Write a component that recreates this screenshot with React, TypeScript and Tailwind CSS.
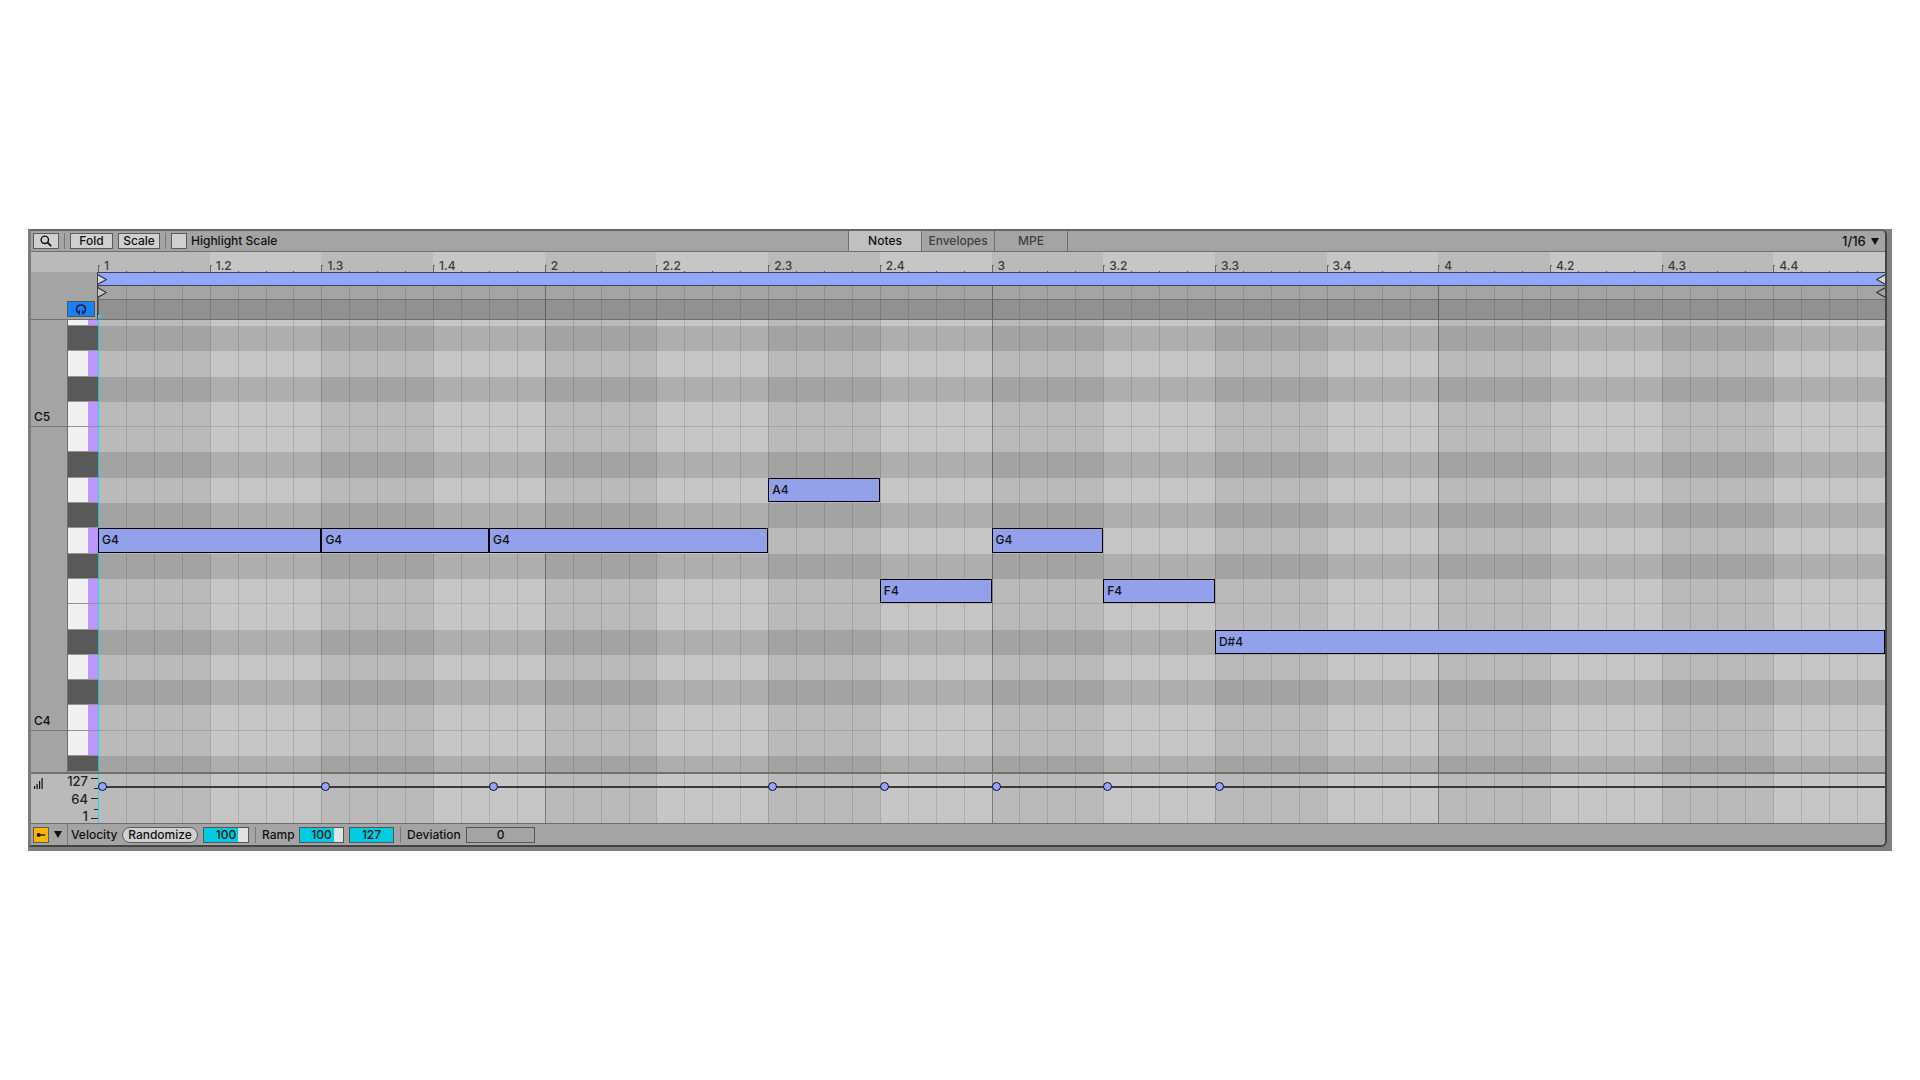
import React, { useState } from 'react';

const BEATS = Array.from({ length: 16 }, (_, i) => i);

// Top to bottom. The first and last rows are cut off by the visible range.
const PITCHES = [
  'E5', 'D#5', 'D5', 'C#5', 'C5', 'B4', 'A#4', 'A4', 'G#4', 'G4',
  'F#4', 'F4', 'E4', 'D#4', 'D4', 'C#4', 'C4', 'B3', 'A#3',
];

interface Note {
  pitch: string;
  start: number; // in sixteenths
  length: number;
}

const NOTES: Note[] = [
  { pitch: 'G4', start: 0, length: 8 },
  { pitch: 'G4', start: 8, length: 6 },
  { pitch: 'G4', start: 14, length: 10 },
  { pitch: 'A4', start: 24, length: 4 },
  { pitch: 'F4', start: 28, length: 4 },
  { pitch: 'G4', start: 32, length: 4 },
  { pitch: 'F4', start: 36, length: 4 },
  { pitch: 'D#4', start: 40, length: 24 },
];

const ROWS = 'grid grid-rows-[6px_repeat(17,minmax(0,1fr))_16px]';
const BUTTON = 'h-4 border border-[#5c5c5c] bg-[#d0d0d0] leading-[14px] font-medium';
const FIELD = 'h-4 border border-[#555] text-center font-medium';
const PARTIAL_FILL = 'bg-linear-to-r from-[#00cbe0] from-78% to-[#e2e2e2] to-78%';

const isBlackKey = (pitch: string) => pitch.includes('#');

const beatLabel = (beat: number) => {
  const bar = Math.floor(beat / 4) + 1;
  return beat % 4 === 0 ? `${bar}` : `${bar}.${(beat % 4) + 1}`;
};

const rowClass = (pitch: string) => {
  if (isBlackKey(pitch)) return 'bg-black/12';
  // neighbouring white keys are told apart by a thin line
  if (pitch === 'C5' || pitch === 'F4' || pitch === 'C4') return 'border-b border-black/12';
  return '';
};

const beatLine = (beat: number, shaded: boolean) => {
  if (beat === 0 && shaded) return 'border-[#19dfe8]';
  return beat % 4 === 0 ? 'border-black/35' : 'border-black/15';
};

const BeatGrid: React.FC<{ shaded?: boolean }> = ({ shaded = false }) => (
  <div className="col-start-1 row-start-1 grid grid-cols-16" aria-hidden="true">
    {BEATS.map((beat) => (
      <div
        key={beat}
        className={`grid grid-cols-4 ${shaded ? (beat % 2 === 0 ? 'bg-[#bababa]' : 'bg-[#c6c6c6]') : ''}`}
      >
        <div className={`border-l ${beatLine(beat, shaded)}`} />
        <div className="border-l border-black/12" />
        <div className="border-l border-black/12" />
        <div className="border-l border-black/12" />
      </div>
    ))}
  </div>
);

const Divider: React.FC = () => <div className="h-4 w-px bg-[#7a7a7a]" />;

const DownArrow: React.FC = () => (
  <svg width="8" height="7" viewBox="0 0 8 7" fill="#111">
    <path d="M0 0h8L4 7z" />
  </svg>
);

const Toolbar: React.FC = () => {
  const [tab, setTab] = useState('Notes');

  return (
    <div className="grid h-[21px] grid-cols-[1fr_auto_1fr] border-b border-[#6e6e6e] bg-[#a4a4a4]">
      <div className="flex items-center gap-[5px] pl-[2px]">
        <button type="button" aria-label="Search" className={`flex w-[26px] items-center justify-center ${BUTTON}`}>
          <svg width="12" height="12" viewBox="0 0 12 12" fill="none" stroke="#111" strokeWidth="1.4">
            <circle cx="4.8" cy="4.8" r="3.7" />
            <path d="M7.4 7.4 11.2 11.2" strokeWidth="1.7" />
          </svg>
        </button>
        <Divider />
        <button type="button" className={`w-[43px] ${BUTTON}`}>
          Fold
        </button>
        <button type="button" className={`w-[42px] ${BUTTON}`}>
          Scale
        </button>
        <Divider />
        <label className="flex items-center gap-1">
          <input
            type="checkbox"
            className="h-4 w-4 appearance-none border border-[#5c5c5c] bg-[#d0d0d0] checked:bg-[#ffb400]"
          />
          Highlight Scale
        </label>
      </div>
      <div role="tablist" className="grid grid-cols-3 border-l border-[#6e6e6e]">
        {['Notes', 'Envelopes', 'MPE'].map((name) => (
          <button
            key={name}
            type="button"
            role="tab"
            aria-selected={tab === name}
            onClick={() => setTab(name)}
            className={`w-[73px] border-r border-[#6e6e6e] font-medium ${
              tab === name ? 'bg-[#c0c0c0] text-[#111]' : 'text-[#404040]'
            }`}
          >
            {name}
          </button>
        ))}
      </div>
      <div className="flex items-center justify-end gap-[5px] pr-[6px]">
        <select aria-label="Grid size" defaultValue="1/16" className="appearance-none text-[13px] leading-4 font-medium">
          <option>1/4</option>
          <option>1/8</option>
          <option>1/16</option>
        </select>
        <DownArrow />
      </div>
    </div>
  );
};

const Ruler: React.FC = () => (
  <div className="grid h-5 grid-cols-[67px_1fr] bg-[#bababa]">
    <div />
    <div className="grid grid-cols-16">
      {BEATS.map((beat) => (
        <div key={beat} className={`grid ${beat % 2 === 0 ? 'bg-[#bababa]' : 'bg-[#c6c6c6]'}`}>
          <div className="col-start-1 row-start-1 grid grid-cols-4 items-end">
            <div className="flex h-[7px]">
              <div className="w-[2px] border-t border-l border-[#666]" />
            </div>
            <div className="h-px w-px bg-[#555]" />
            <div className="h-px w-px bg-[#555]" />
            <div className="h-px w-px bg-[#555]" />
          </div>
          <span className="col-start-1 row-start-1 self-end pl-[6px] leading-3 text-[#3c3c3c]">
            {beatLabel(beat)}
          </span>
        </div>
      ))}
    </div>
  </div>
);

const Marker: React.FC<{ side: 'start' | 'end'; fill: string }> = ({ side, fill }) => (
  <svg width="9" height="11" viewBox="0 0 9 11" fill={fill} stroke="#333" strokeWidth="1.2">
    {side === 'start' ? <path d="M0 .7 8.4 5.5 0 10.3" /> : <path d="M9 .7.6 5.5 9 10.3" />}
  </svg>
);

const LoopLanes: React.FC = () => (
  <div className="grid grid-cols-[67px_1fr] bg-[#a4a4a4]">
    <div className="flex items-end justify-end border-r border-[#444] pr-[2px] pb-[2px]">
      <button
        type="button"
        aria-label="Preview"
        className="flex h-4 w-7 items-center justify-center border border-[#555] bg-[#1a80f5]"
      >
        {/* headphones */}
        <svg width="12" height="12" viewBox="0 0 12 12" fill="none" stroke="#10233c">
          <path d="M2.9 9.6A4.5 4.5 0 1 1 9.1 9.6" strokeWidth="1.6" />
          <path d="M4.2 7.2v4.4M7.8 7.2v4.4" strokeWidth="1.7" />
        </svg>
      </button>
    </div>
    <div>
      <div className="flex h-[14px] items-center justify-between border-y border-[#444] bg-[#92a6ff]">
        <Marker side="start" fill="#d6d6d6" />
        <Marker side="end" fill="#d6d6d6" />
      </div>
      <div className="grid h-[14px] border-b border-[#6e6e6e]">
        <BeatGrid />
        <div className="col-start-1 row-start-1 flex items-center justify-between">
          <Marker side="start" fill="#c8c8c8" />
          <Marker side="end" fill="#a4a4a4" />
        </div>
      </div>
      <div className="grid h-[19px] bg-[#919191]">
        <BeatGrid />
        <svg width="4" height="4" viewBox="0 0 4 4" className="col-start-1 row-start-1 self-end" fill="#12e6f0">
          <path d="M0 0h4L0 4z" />
        </svg>
      </div>
    </div>
  </div>
);

const Keyboard: React.FC = () => (
  <div className="grid grid-cols-[36px_1fr] bg-[#a4a4a4]">
    <div className={`${ROWS} leading-4`}>
      <div className="row-span-5 flex items-end border-b border-[#777] pb-[1px] pl-[3px]">C5</div>
      <div className="row-span-12 flex items-end border-b border-[#777] pb-[1px] pl-[3px]">C4</div>
    </div>
    <div className={`${ROWS} border-l border-[#707070]`}>
      {PITCHES.map((pitch) => (
        <button
          key={pitch}
          type="button"
          aria-label={pitch}
          className={`border-b border-[#949494] ${
            isBlackKey(pitch) ? 'bg-[#595959]' : 'bg-linear-to-l from-[#bc97ff] from-33% to-[#f0f0f0] to-33%'
          }`}
        />
      ))}
    </div>
  </div>
);

const NoteEditor: React.FC = () => (
  <div className="grid h-[453px] grid-cols-[67px_1fr] border-t border-[#6e6e6e]">
    <Keyboard />
    <div className="grid">
      <BeatGrid shaded />
      <div className={`col-start-1 row-start-1 ${ROWS}`}>
        {PITCHES.map((pitch) => (
          <div key={pitch} className={rowClass(pitch)} />
        ))}
      </div>
      <div className={`col-start-1 row-start-1 grid-cols-[repeat(64,minmax(0,1fr))] ${ROWS}`}>
        {NOTES.map((note) => (
          <div
            key={note.start}
            className="mb-px flex items-center border border-black bg-[#92a1ea] pl-[3px]"
            style={{
              gridColumn: `${note.start + 1} / span ${note.length}`,
              gridRow: PITCHES.indexOf(note.pitch) + 1,
            }}
          >
            {note.pitch}
          </div>
        ))}
      </div>
    </div>
  </div>
);

const VelocityLane: React.FC = () => (
  <div className="grid h-[51px] grid-cols-[67px_1fr] border-t-2 border-[#707070]">
    <div className="flex justify-between bg-[#bababa] pl-[3px]">
      <svg width="9" height="11" viewBox="0 0 9 11" stroke="#111" strokeWidth="1.2" className="mt-1">
        <path d="M.6 8v3M3.1 6v5M5.6 3v8M8.1 0v11" />
      </svg>
      <div className="flex text-[13px] leading-[14px] text-[#222]">
        <div className="flex flex-col justify-between pr-[3px] text-right">
          <span>127</span>
          <span>64</span>
          <span>1</span>
        </div>
        <svg width="7" height="49" viewBox="0 0 7 49" stroke="#222">
          <path d="M0 4.5h7M3 14.5h4M0 24.5h7M3 35.5h4M0 44.5h7" />
        </svg>
      </div>
    </div>
    <div className="grid">
      <BeatGrid shaded />
      <div className="col-start-1 row-start-1 mt-3 h-[2px] bg-[#3a3a3a]" />
      <div className="col-start-1 row-start-1 mt-2 grid grid-cols-[repeat(64,minmax(0,1fr))]">
        {NOTES.map((note) => (
          <div
            key={note.start}
            className="h-[9px] w-[9px] rounded-full border border-[#111] bg-[#92a6ff]"
            style={{ gridColumn: note.start + 1, gridRow: 1 }}
          />
        ))}
      </div>
    </div>
  </div>
);

const VelocityBar: React.FC = () => (
  <div className="flex h-[22px] items-center border-t border-[#6e6e6e] bg-[#a4a4a4] pl-[2px]">
    <button
      type="button"
      aria-label="Show velocity lane"
      className="flex h-4 w-4 items-center justify-center border border-[#5c5c5c] bg-[#ffb400]"
    >
      <svg width="10" height="6" viewBox="0 0 10 6" fill="#111">
        <circle cx="2.6" cy="3" r="2" />
        <path d="M2 2.3h7.4v1.4H2z" />
      </svg>
    </button>
    <button
      type="button"
      aria-label="Lane menu"
      className="flex h-full w-[19px] items-center justify-center border-r border-[#7a7a7a]"
    >
      <DownArrow />
    </button>
    <span className="w-[54px] pl-[3px]">Velocity</span>
    <button type="button" className={`w-[76px] rounded-full ${BUTTON}`}>
      Randomize
    </button>
    <input
      aria-label="Randomize amount"
      defaultValue="100"
      className={`mr-[6px] ml-[5px] w-[46px] ${FIELD} ${PARTIAL_FILL}`}
    />
    <Divider />
    <label htmlFor="ramp-start" className="w-[43px] pl-[6px]">
      Ramp
    </label>
    <input id="ramp-start" defaultValue="100" className={`mr-[5px] w-[45px] ${FIELD} ${PARTIAL_FILL}`} />
    <input aria-label="Ramp end" defaultValue="127" className={`mr-[6px] w-[45px] bg-[#00cbe0] ${FIELD}`} />
    <Divider />
    <label htmlFor="deviation" className="w-[65px] pl-[6px]">
      Deviation
    </label>
    <input id="deviation" defaultValue="0" className={`w-[69px] ${FIELD}`} />
  </div>
);

export default function App() {
  return (
    <main className="flex min-h-screen items-center bg-white px-7 font-['Inter',sans-serif] text-xs font-medium text-[#111]">
      <section className="flex-1 border-r-[5px] border-b-4 border-[#808080] bg-[#808080]">
        <div className="overflow-hidden rounded-r-md border-t-2 border-r-2 border-b-2 border-l-[3px] border-t-[#666] border-r-[#444] border-b-[#444] border-l-[#7b7b7b]">
          <Toolbar />
          <Ruler />
          <LoopLanes />
          <NoteEditor />
          <VelocityLane />
          <VelocityBar />
        </div>
      </section>
    </main>
  );
}
